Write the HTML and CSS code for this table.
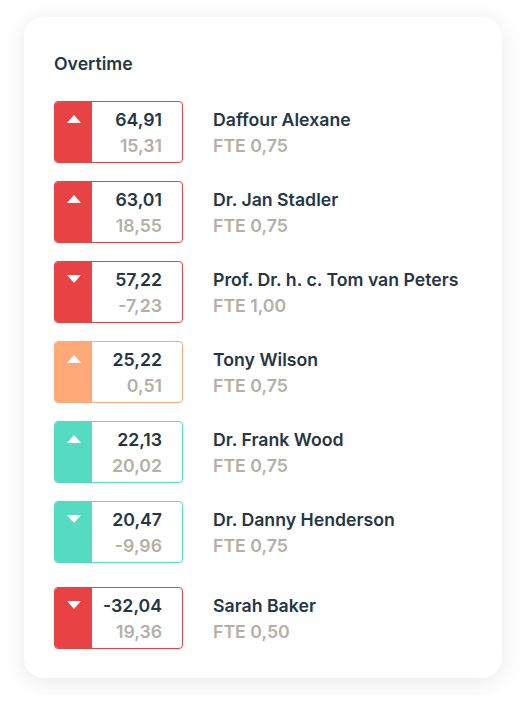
FILE: index.html
```html
<!DOCTYPE html>
<html lang="en">
<head>
<meta charset="utf-8">
<title>Overtime</title>
<link rel="stylesheet" href="styles.css">
</head>
<body>
<div class="card">
  <h2 class="title">Overtime</h2>
  <ul class="list">
    <li class="row red">
      <div class="box">
        <div class="flag"><svg class="tri" viewBox="0 0 14 8"><path d="M7 0L14 8H0Z"/></svg></div>
        <div class="nums"><span class="main">64,91</span><span class="sub">15,31</span></div>
      </div>
      <div class="info"><span class="name">Daffour Alexane</span><span class="fte">FTE 0,75</span></div>
    </li>
    <li class="row red">
      <div class="box">
        <div class="flag"><svg class="tri" viewBox="0 0 14 8"><path d="M7 0L14 8H0Z"/></svg></div>
        <div class="nums"><span class="main">63,01</span><span class="sub">18,55</span></div>
      </div>
      <div class="info"><span class="name">Dr. Jan Stadler</span><span class="fte">FTE 0,75</span></div>
    </li>
    <li class="row red">
      <div class="box">
        <div class="flag"><svg class="tri" viewBox="0 0 14 8"><path d="M0 0H14L7 8Z"/></svg></div>
        <div class="nums"><span class="main">57,22</span><span class="sub">-7,23</span></div>
      </div>
      <div class="info"><span class="name">Prof. Dr. h. c. Tom van Peters</span><span class="fte">FTE 1,00</span></div>
    </li>
    <li class="row orange">
      <div class="box">
        <div class="flag"><svg class="tri" viewBox="0 0 14 8"><path d="M7 0L14 8H0Z"/></svg></div>
        <div class="nums"><span class="main">25,22</span><span class="sub">0,51</span></div>
      </div>
      <div class="info"><span class="name">Tony Wilson</span><span class="fte">FTE 0,75</span></div>
    </li>
    <li class="row teal">
      <div class="box">
        <div class="flag"><svg class="tri" viewBox="0 0 14 8"><path d="M7 0L14 8H0Z"/></svg></div>
        <div class="nums"><span class="main">22,13</span><span class="sub">20,02</span></div>
      </div>
      <div class="info"><span class="name">Dr. Frank Wood</span><span class="fte">FTE 0,75</span></div>
    </li>
    <li class="row teal">
      <div class="box">
        <div class="flag"><svg class="tri" viewBox="0 0 14 8"><path d="M0 0H14L7 8Z"/></svg></div>
        <div class="nums"><span class="main">20,47</span><span class="sub">-9,96</span></div>
      </div>
      <div class="info"><span class="name">Dr. Danny Henderson</span><span class="fte">FTE 0,75</span></div>
    </li>
    <li class="row red last">
      <div class="box">
        <div class="flag"><svg class="tri" viewBox="0 0 14 8"><path d="M0 0H14L7 8Z"/></svg></div>
        <div class="nums"><span class="main">-32,04</span><span class="sub">19,36</span></div>
      </div>
      <div class="info"><span class="name">Sarah Baker</span><span class="fte">FTE 0,50</span></div>
    </li>
  </ul>
</div>
</body>
</html>
```

FILE: styles.css
```css
* { box-sizing: border-box; }
html, body { margin: 0; background: #ffffff; }
body {
  padding: 17px 24px;
  font-family: Inter, "Noto Sans", "Liberation Sans", sans-serif;
  color: #263644;
}
.card {
  width: 478px;
  background: #ffffff;
  border-radius: 20px;
  box-shadow: 0 4px 24px rgba(0, 0, 0, 0.09);
  padding: 35px 30px 29px;
}
.title {
  margin: 0;
  font-size: 17.7px;
  line-height: 24px;
  font-weight: 600;
  color: #263644;
}
.list {
  list-style: none;
  margin: 25px 0 0;
  padding: 0;
  display: flex;
  flex-direction: column;
  gap: 18px;
}
.row {
  display: flex;
  align-items: flex-start;
  gap: 30px;
}
.row.last { margin-top: 6px; }
.box {
  width: 129px;
  height: 62px;
  display: flex;
  border: 1px solid var(--c);
  border-radius: 4px;
  overflow: hidden;
}
.red { --c: #e94244; }
.orange { --c: #ffa878; }
.teal { --c: #55dbc2; }
.flag {
  width: 37px;
  background: var(--c);
  display: flex;
  justify-content: center;
  padding-top: 13px;
}
.tri { width: 14px; height: 8px; fill: #ffffff; display: block; }
.nums {
  flex: 1;
  display: flex;
  flex-direction: column;
  align-items: flex-end;
  padding: 5px 20px 0 0;
}
.main, .sub, .name, .fte {
  font-size: 17.7px;
  line-height: 26px;
  font-weight: 600;
}
.main, .name { color: #263644; }
.sub, .fte { color: #b4b0a9; }
.info {
  display: flex;
  flex-direction: column;
  padding-top: 6px;
}
```
